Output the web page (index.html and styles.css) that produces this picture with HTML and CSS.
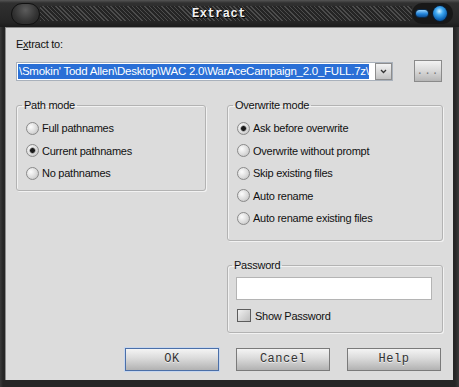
FILE: index.html
```html
<!DOCTYPE html>
<html>
<head>
    <title>Extract</title>
    <link rel="stylesheet" href="styles.css">
</head>
<body>
    <div class="window">
        <div class="titlebar">
            <span class="sys-pill"></span>
            <div class="title-band"><span class="title">Extract</span></div>
            <div class="caption">
                <span class="btn-min"></span>
                <span class="btn-close"></span>
            </div>
        </div>
        <div class="client">
            <label class="field-label" for="dest">E<u>x</u>tract to:</label>
            <div class="path-row">
                <div class="combo" id="dest">
                    <span class="combo-text"><span class="sel">\Smokin' Todd Allen\Desktop\WAC 2.0\WarAceCampaign_2.0_FULL.7z\</span></span>
                    <span class="combo-arrow">
                        <svg width="7" height="5" viewBox="0 0 7 5"><path d="M1 1 L3.5 3.5 L6 1" fill="none" stroke="#333" stroke-width="1.3"/></svg>
                    </span>
                </div>
                <button class="browse">...</button>
            </div>
            <div class="groups">
                <fieldset class="group path-group">
                    <legend>Path mode</legend>
                    <label class="option"><input type="radio" name="path"> Full pathnames</label>
                    <label class="option"><input type="radio" name="path" checked> Current pathnames</label>
                    <label class="option"><input type="radio" name="path"> No pathnames</label>
                </fieldset>
                <div class="right-col">
                    <fieldset class="group overwrite-group">
                        <legend>Overwrite mode</legend>
                        <label class="option"><input type="radio" name="over" checked> Ask before overwrite</label>
                        <label class="option"><input type="radio" name="over"> Overwrite without prompt</label>
                        <label class="option"><input type="radio" name="over"> Skip existing files</label>
                        <label class="option"><input type="radio" name="over"> Auto rename</label>
                        <label class="option"><input type="radio" name="over"> Auto rename existing files</label>
                    </fieldset>
                    <fieldset class="group password-group">
                        <legend>Password</legend>
                        <input type="password" class="pass-input">
                        <label class="check"><input type="checkbox"> Show Password</label>
                    </fieldset>
                </div>
            </div>
            <div class="buttons">
                <button class="btn btn-default">OK</button>
                <button class="btn">Cancel</button>
                <button class="btn">Help</button>
            </div>
        </div>
    </div>
</body>
</html>
```
FILE: styles.css
```css
body {
    margin: 0;
    background: #1e1e1e;
    font-family: "Liberation Sans", Arial, sans-serif;
    font-size: 11px;
    letter-spacing: -0.25px;
    color: #111;
}
.window {
    width: 459px;
    height: 387px;
    display: flex;
    flex-direction: column;
    background: linear-gradient(90deg, #3a3a3a, #262626 3px, #262626 455px, #3a3a3a);
}
.titlebar {
    height: 27px;
    display: flex;
    align-items: center;
    padding: 0 6px 0 11px;
    box-sizing: border-box;
    background: linear-gradient(#555, #303030 3px, #262626 22px, #1c1c1c);
}
.sys-pill {
    width: 29px;
    height: 22px;
    box-sizing: border-box;
    border-radius: 11px;
    border: 1px solid #111;
    background: radial-gradient(ellipse at 50% 30%, #5c5c5c, #333 60%, #222);
}
.title-band {
    flex: 1;
    height: 15px;
    display: flex;
    align-items: center;
    justify-content: center;
    padding-right: 14px;
    background: repeating-linear-gradient(45deg, #4c4c4c 0 1px, #252525 1px 3px);
}
.title {
    font-family: "Liberation Mono", monospace;
    font-weight: bold;
    font-size: 12px;
    letter-spacing: 0.5px;
    color: #f2f2f2;
    text-shadow: 1px 1px 0 #000;
}
.caption {
    width: 41px;
    height: 21px;
    box-sizing: border-box;
    display: flex;
    align-items: center;
    gap: 5px;
    padding-left: 4px;
    border-radius: 10px;
    background: #181818;
}
.btn-min {
    width: 12px;
    height: 7px;
    border-radius: 4px;
    background: linear-gradient(#9ad6ff, #2384da 55%, #0d4f96);
    box-shadow: 0 0 0 1px #0a2a4a;
}
.btn-close {
    width: 14px;
    height: 15px;
    border-radius: 50%;
    background: radial-gradient(circle at 45% 35%, #d0f0ff 0, #3ea8f2 30%, #0a5fb0 70%, #06305c);
    box-shadow: 0 0 0 1px #0b1e33;
}
.client {
    flex: 1;
    display: flex;
    flex-direction: column;
    margin: 0 6px 7px 5px;
    padding: 11px 10px 0 11px;
    background: #dcdcdc;
    box-shadow: inset 1px 1px 0 #8c8c8c;
}
.field-label {
    line-height: 13px;
}
.path-row {
    display: flex;
    align-items: center;
    margin-top: 9px;
}
.combo {
    width: 377px;
    height: 19px;
    box-sizing: border-box;
    display: flex;
    align-items: center;
    padding-left: 1px;
    border: 1px solid #a9b1bb;
    background: #fff;
}
.combo-text {
    flex: 1;
    overflow: hidden;
    white-space: nowrap;
}
.sel {
    display: inline-block;
    line-height: 15px;
    padding-left: 1px;
    background: #2a6fd6;
    color: #fff;
    font-size: 11.5px;
}
.combo-arrow {
    width: 17px;
    height: 17px;
    box-sizing: border-box;
    display: flex;
    align-items: center;
    justify-content: center;
    border: 1px solid #8d8d8d;
    background: linear-gradient(#f4f4f4, #c2c2c2);
}
.browse {
    margin-left: 21px;
    width: 28px;
    height: 22px;
    padding: 0;
    border: 1px solid #8a8a8a;
    background: linear-gradient(#f2f2f2, #d8d8d8 50%, #b6b6b6);
    font-family: "Liberation Mono", monospace;
    font-size: 11px;
    letter-spacing: 1px;
    color: #777;
}
.groups {
    display: grid;
    grid-template-columns: 190px 216px;
    column-gap: 21px;
    align-items: start;
    margin-top: 17px;
}
.group {
    margin: 0;
    min-width: 0;
    padding: 5px 8px 5px 9px;
    border: 1px solid #b3b3b3;
    border-radius: 3px;
    box-shadow: inset 1px 1px 0 #f2f2f2, 1px 1px 0 #f2f2f2;
}
.group legend {
    padding: 0 2px;
    margin-left: -4px;
    line-height: 13px;
}
.option {
    display: flex;
    align-items: center;
    gap: 3px;
    height: 22.5px;
}
.option input {
    appearance: none;
    margin: 0;
    width: 13px;
    height: 13px;
    box-sizing: border-box;
    border: 1px solid #8a8a8a;
    border-radius: 50%;
    background: radial-gradient(circle at 35% 35%, #fcfcfc, #d8d8d8 60%, #b6b6b6);
}
.option input:checked {
    background: radial-gradient(circle, #1a1a1a 0 2px, #777 2.5px, transparent 3.5px),
        radial-gradient(circle at 35% 35%, #fcfcfc, #d8d8d8 60%, #b6b6b6);
}
.overwrite-group {
    padding-bottom: 10px;
}
.right-col {
    display: flex;
    flex-direction: column;
    gap: 18px;
}
.password-group {
    padding: 5px 10px 6px 8px;
}
.pass-input {
    display: block;
    width: 100%;
    height: 23px;
    margin: 0;
    box-sizing: border-box;
    border: 1px solid #b4b4b4;
    background: #fff;
}
.check {
    display: flex;
    align-items: center;
    gap: 4px;
    height: 20px;
    margin-top: 6px;
    padding-left: 1px;
}
.check input {
    appearance: none;
    margin: 0;
    width: 14px;
    height: 13px;
    border: 1px solid #5c5c5c;
    background: linear-gradient(135deg, #f0f0f0, #bdbdbd);
}
.buttons {
    display: flex;
    justify-content: flex-end;
    gap: 17px;
    margin-top: 15px;
    padding-right: 2px;
}
.btn {
    width: 94px;
    height: 23px;
    padding: 0;
    border: 1px solid #7a7a7a;
    background: linear-gradient(#f4f4f4, #dadada 45%, #b2b2b2);
    font-family: "Liberation Mono", monospace;
    font-size: 12px;
    letter-spacing: 0.5px;
    color: #333;
    text-shadow: 0 1px 0 #eee;
}
.btn-default {
    border-color: #4b6fa8;
    box-shadow: 0 0 0 1px #c6d6ee;
}
```
